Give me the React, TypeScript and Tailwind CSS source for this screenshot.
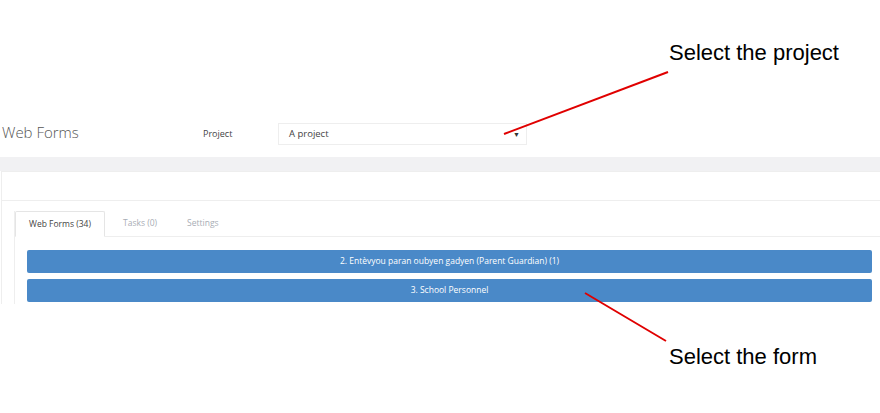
export default function App() {
  const forms = ['2. Entèvyou paran oubyen gadyen (Parent Guardian) (1)', '3. School Personnel'];
  const tabs = ['Web Forms (34)', 'Tasks (0)', 'Settings'];

  return (
    <div className="relative w-[880px] h-[413px] bg-white overflow-hidden font-['Open_Sans',sans-serif]">
      {/* Page header */}
      <div className="pt-[123px] flex items-center h-[145px]">
        <h1 className="pl-[2px] w-[203px] text-[15px] font-light text-[#555] leading-[22px] -mt-[4px]">Web Forms</h1>
        <span className="w-[75px] text-[9px] text-[#444]">Project</span>
        <div className="w-[249px] h-[22px] border border-[#eee] flex items-center justify-between pl-[10px] pr-[6px]">
          <span className="text-[9.5px] text-[#444]">A project</span>
          <span className="text-[7px] text-[#333] leading-none">▼</span>
        </div>
      </div>

      {/* Gray band */}
      <div className="mt-[12px] h-[14px] bg-[#f1f1f3]" />

      {/* Panel */}
      <div className="ml-[1px] border-l border-t border-[#eee] bg-white">
        <div className="h-[29px] border-b border-[#eee]" />
        <div className="pl-[12px] pt-[10px]">
          <div className="border-l border-[#eee] h-[93px]">
            <div className="flex h-[26px] border-b border-[#eee]">
              {tabs.map((t, i) => (
                <div
                  key={t}
                  className={
                    i === 0
                      ? 'w-[90px] -mb-px border border-[#e5e5e5] border-b-white rounded-t-[2px] bg-white flex items-center justify-center text-[8.5px] text-[#444]'
                      : 'pl-[18px] pr-[12px] flex items-center text-[8.5px] text-[#a8adb5]'
                  }
                >
                  {t}
                </div>
              ))}
            </div>
            <div className="pl-[12px] pr-[8px] pt-[13px] flex flex-col gap-[6px]">
              {forms.map((f) => (
                <div
                  key={f}
                  className="h-[23px] rounded-[2px] bg-[#4a89c8] flex items-center justify-center text-[8.5px] text-white"
                >
                  {f}
                </div>
              ))}
            </div>
          </div>
        </div>
      </div>

      {/* Annotations */}
      <svg className="absolute left-0 top-0 pointer-events-none" width="880" height="413">
        <line x1="668" y1="72" x2="504" y2="134" stroke="#e00000" strokeWidth="2" />
        <line x1="585" y1="293" x2="666" y2="341" stroke="#e00000" strokeWidth="2" />
      </svg>
      <div className="absolute left-[669px] top-[40px] text-[22px] leading-[26px] text-black font-['Liberation_Sans',Arial,sans-serif]">
        Select the project
      </div>
      <div className="absolute left-[669px] top-[344px] text-[22px] leading-[26px] text-black font-['Liberation_Sans',Arial,sans-serif]">
        Select the form
      </div>
    </div>
  );
}
